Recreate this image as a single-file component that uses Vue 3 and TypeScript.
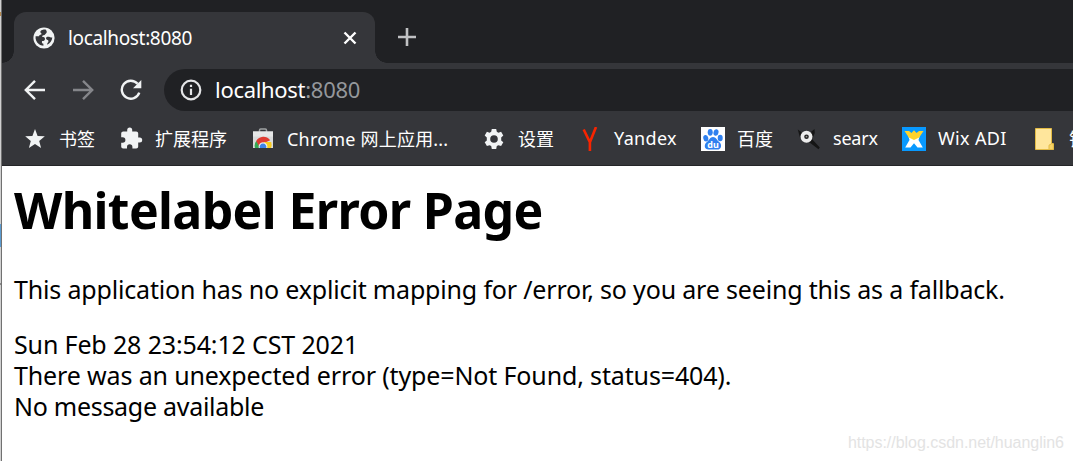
<template>
    <div class="window">
        <div class="edge"><i class="edge-orange"></i><i class="edge-blue"></i><i class="edge-mark"></i></div>
        <div class="browser">
            <header class="tabs">
                <div class="tab">
                    <svg class="globe" viewBox="0 0 22 22">
                        <circle cx="11" cy="11" r="10.6" fill="#f1f3f4" />
                        <path d="M12.600 2.600C9.600 2.300 7 3.700 7.400 5.200c.2.900 1.300.9 1.200 1.700-.1.900-2.500.6-2.600 2.300H2.600c-.4 3 .8 6 3.200 7.800 1.300 1 2.900 1.700 4.600 1.800v-2c-1.500-.4-1.800-1.600-1.300-2.900 1.800.1 2.900-.6 2.900-2 0-1.500-1.200-2.200-2.900-2.200 0-1 .6-1.500 1.700-1.500 1.400 0 1.200-1.400 2.200-1.800 1-.4 1.200-2.300-.4-3.800zM14.300 9.800c-1.500.2-1.700 2.300-.3 2.900 1 .4 1.500.5 1.400 1.700 0 1-1.300 1.400-1.300 3.300 3-1.200 5-4 5.200-7.200-1.500.2-2.600-.9-5-.7z" fill="#35363a" />
                    </svg>
                    <span class="tab-title">{{ host }}:{{ port }}</span>
                    <svg class="close" viewBox="0 0 14 14"><path d="M1.500 1.500l11 11M12.500 1.500l-11 11" /></svg>
                </div>
                <svg class="plus" viewBox="0 0 18 18"><path d="M9 0v18M0 9h18" /></svg>
            </header>

            <nav class="toolbar">
                <svg class="nav-icon" viewBox="0 0 22 22"><path d="M21 11H2.500M11 1.800L1.800 11l9.200 9.200" /></svg>
                <svg class="nav-icon disabled" viewBox="0 0 22 22"><path d="M1 11h18.500M11 1.800L20.200 11 11 20.200" /></svg>
                <svg class="nav-icon" viewBox="0 0 22 22">
                    <path d="M19.300 13.700A9 9 0 1 1 17.600 4.800" />
                    <path d="M21.300 1v8.300H13z" class="solid" />
                </svg>
                <div class="address">
                    <svg class="info" viewBox="0 0 22 22">
                        <circle cx="11" cy="11" r="9.300" />
                        <path d="M11 9.800v6.200M11 5.800v2.300" />
                    </svg>
                    <span class="url">{{ host }}<em>:{{ port }}</em></span>
                </div>
            </nav>

            <div class="bookmarks">
                <div v-for="b in bookmarks" :key="b.icon" class="bookmark">
                    <svg viewBox="0 0 24 24">
                        <path v-if="b.icon === 'star'" d="M12 2l2.600 6.900 7.200.4-5.600 4.600 1.900 7.100-6.100-4-6.100 4 1.900-7.100-5.600-4.600 7.200-.4z" fill="#f1f3f4" />
                        <path v-else-if="b.icon === 'puzzle'" d="M19.700 11h-1.500V7c0-1.100-.9-2-2-2h-4V3.500a2.500 2.500 0 0 0-5 0V5h-4c-1.100 0-2 .9-2 2v3.800h1.500a2.700 2.700 0 0 1 0 5.400H1.200V20c0 1.100.9 2 2 2H7v-1.500a2.700 2.700 0 0 1 5.400 0V22h3.800c1.100 0 2-.9 2-2v-4h1.500a2.500 2.500 0 0 0 0-5z" transform="translate(1 -.5)" fill="#f1f3f4" />
                        <g v-else-if="b.icon === 'store'">
                            <path d="M8.500 5V3.200q0-1.200 1.200-1.200h4.600q1.200 0 1.200 1.200V5" fill="none" stroke="#9fa2a3" stroke-width="1.500" />
                            <path d="M2 4.500h20V21H2z" fill="#d9dbdb" />
                            <path d="M2 4.500h20v5H2z" fill="#e7e8e8" />
                            <path d="M4 21a8 8 0 0 1 1.400-7.200L9 20v1z" fill="#35a852" />
                            <path d="M5.200 14a8.200 8.200 0 0 1 14-.8L12 16.500 8 19z" fill="#df3c32" />
                            <path d="M13 15h7.200a9 9 0 0 1-.1 6H14z" fill="#f9cb1f" />
                            <path d="M7.800 21a4.400 4.400 0 1 1 8.400 0z" fill="#f1f1f1" />
                            <path d="M8.800 21a3.400 3.400 0 1 1 6.400 0z" fill="#3f83e8" />
                        </g>
                        <path v-else-if="b.icon === 'gear'" fill-rule="evenodd" fill="#f1f3f4" d="M9.800 2h4.400l.6 2.800 1.600.9 2.700-.9 2.200 3.800-2.100 1.900v2.900l2.100 1.900-2.200 3.800-2.700-.9-1.600.9-.6 2.800H9.800l-.6-2.800-1.600-.9-2.700.9-2.200-3.800 2.100-1.900v-2.900L2.700 8.600l2.200-3.800 2.700.9 1.600-.9zM12 8.200a3.800 3.800 0 1 0 0 7.600 3.800 3.800 0 0 0 0-7.600z" />
                        <path v-else-if="b.icon === 'yandex'" d="M5.700 2.500l6.200 12.700V24M18 0l-6 15" fill="none" stroke="#f82400" stroke-width="2.600" />
                        <g v-else-if="b.icon === 'baidu'">
                            <path d="M0 0h24v24H0z" fill="#fff" />
                            <g fill="#2f80ef">
                                <ellipse cx="4.800" cy="11.300" rx="2.500" ry="3.300" transform="rotate(-12 4.800 11.300)" />
                                <ellipse cx="9.200" cy="5.300" rx="2.500" ry="3.400" />
                                <ellipse cx="15" cy="5.500" rx="2.500" ry="3.300" transform="rotate(12 15 5.500)" />
                                <ellipse cx="19.200" cy="11" rx="2.500" ry="3.200" />
                                <path d="M12 10c3 0 3.800 3 6.200 5 3.200 2.600 2.200 7.600-2 7.600H7.600c-4.200 0-5-4.700-2-7.300C8.400 13.200 9 10 12 10z" />
                            </g>
                            <text x="12" y="20.800" text-anchor="middle" class="du">du</text>
                        </g>
                        <g v-else-if="b.icon === 'searx'">
                            <path d="M.8 2.500l3.800 2.700h9L17.500 2l.3 4-2.600 6.300 7.600 8.200-1.300 1.800-9.500-7.200H7L2.800 10z" fill="#151515" />
                            <circle cx="9.500" cy="9.800" r="6" fill="#ededed" />
                            <circle cx="9.500" cy="9.800" r="2.300" fill="#222" />
                            <circle cx="9.500" cy="9.600" r=".9" fill="#999" />
                        </g>
                        <g v-else-if="b.icon === 'wix'">
                            <path d="M0 0h24v24H0z" fill="#0899ff" />
                            <path d="M6 8h12l-1.500 5 4.300 7.500h-5.300L12 16.200l-3.500 4.300H3.200L7.500 13z" fill="#fff" />
                            <path d="M2.500 4H7l2.500 2L12 3.200 14.500 6 17 4h4.500l-4.300 6.500L12 13l-5.200-2.500z" fill="#ffd32c" />
                        </g>
                        <g v-else>
                            <path d="M2.500 1.500h16v15.200h1.800v5.800H2.500z" fill="#ffe69c" stroke="#e3bb44" />
                            <path d="M16 22.500v-4.300l2.500-1.500h1.800v5.800z" fill="#f8d568" stroke="#e3bb44" />
                        </g>
                    </svg>
                    <span :class="b.icon">{{ b.label }}</span>
                </div>
            </div>

            <main class="page">
                <h1>Whitelabel Error Page</h1>
                <p class="fallback">This application has no explicit mapping for /error, so you are seeing this as a fallback.</p>
                <div class="date">Sun Feb 28 23:54:12 CST 2021</div>
                <div class="type">There was an unexpected error (type=Not Found, status=404).</div>
                <div class="message">No message available</div>
                <span class="watermark">https://blog.csdn.net/huanglin6</span>
            </main>
        </div>
    </div>
</template>

<script setup lang="ts">
interface Bookmark {
    icon: string;
    label: string;
}

const host = 'localhost';
const port = 8080;

const bookmarks: Bookmark[] = [
    { icon: 'star', label: '书签' },
    { icon: 'puzzle', label: '扩展程序' },
    { icon: 'store', label: 'Chrome 网上应用...' },
    { icon: 'gear', label: '设置' },
    { icon: 'yandex', label: 'Yandex' },
    { icon: 'baidu', label: '百度' },
    { icon: 'searx', label: 'searx' },
    { icon: 'wix', label: 'Wix ADI' },
    { icon: 'folder', label: '镜' },
];
</script>

<style>
body {
    overflow: hidden;
}
</style>

<style scoped>
.window {
    display: flex;
    width: 1073px;
    height: 461px;
    overflow: hidden;
    font-family: "Noto Sans", "Noto Sans CJK SC", sans-serif;
    background: #fff;
}

.edge {
    flex: none;
    display: flex;
    flex-direction: column;
    box-sizing: border-box;
    width: 2px;
    border-right: 1px solid #717171;
    background: #d0d0d0;
}

.edge-orange {
    height: 4px;
    margin-top: 12px;
    background: #b98c50;
}

.edge-blue {
    height: 23px;
    margin-top: 208px;
    background: #5b9bd0;
}

.edge-mark {
    height: 2px;
    margin-top: 36px;
    background: #888;
}

.browser {
    flex: 1;
    min-width: 0;
    display: flex;
    flex-direction: column;
}

.tabs {
    display: flex;
    box-sizing: border-box;
    height: 63px;
    padding: 12px 0 0 12px;
    background: #202124;
}

.tab {
    position: relative;
    display: flex;
    align-items: center;
    box-sizing: border-box;
    width: 361px;
    height: 51px;
    padding: 0 18px 0 19px;
    border-radius: 12px 12px 0 0;
    background: #35363a;
}

.tab::before,
.tab::after {
    content: "";
    position: absolute;
    bottom: 0;
    width: 12px;
    height: 12px;
}

.tab::before {
    left: -12px;
    background: radial-gradient(circle at 0 0, transparent 11.500px, #35363a 12px);
}

.tab::after {
    right: -12px;
    background: radial-gradient(circle at 100% 0, transparent 11.500px, #35363a 12px);
}

.globe {
    width: 22px;
    height: 22px;
}

.tab-title {
    flex: 1;
    margin-left: 13px;
    color: #fff;
    font-size: 19px;
    letter-spacing: -0.350px;
}

.close {
    width: 14px;
    height: 14px;
    stroke: #fff;
    stroke-width: 2.400;
}

.plus {
    width: 18px;
    height: 18px;
    margin: 16px 0 0 23px;
    stroke: #c0c1c3;
    stroke-width: 2.600;
}

.toolbar {
    display: flex;
    align-items: center;
    box-sizing: border-box;
    height: 53px;
    padding-left: 22px;
    gap: 26px;
    background: #35363a;
}

.nav-icon {
    flex: none;
    width: 22px;
    height: 22px;
    fill: none;
    stroke: #f1f3f4;
    stroke-width: 2.400;
}

.disabled {
    stroke: #85868a;
}

.solid {
    fill: #f1f3f4;
    stroke: none;
}

.address {
    flex: 1;
    display: flex;
    align-items: center;
    height: 42px;
    margin-left: -4px;
    padding-left: 16px;
    border-radius: 21px 0 0 21px;
    background: #202124;
}

.info {
    width: 22px;
    height: 22px;
    fill: none;
    stroke: #e4e5e7;
    stroke-width: 2.200;
}

.url {
    margin: -2px 0 0 13px;
    color: #fff;
    font-size: 22px;
    letter-spacing: -0.300px;
}

.url em {
    color: #94979b;
    font-style: normal;
}

.bookmarks {
    display: grid;
    grid-template-columns: 96px 132px 231px 96px 123px 96px 105px 131px 100px;
    box-sizing: border-box;
    height: 50px;
    padding: 10px 0 0 21px;
    overflow: hidden;
    border-bottom: 1px solid #242528;
    background: #35363a;
}

.bookmark {
    display: flex;
    align-items: center;
    height: 26px;
    gap: 12px;
    color: #fff;
    font-size: 18px;
    white-space: nowrap;
}

.bookmark svg {
    flex: none;
    width: 24px;
    height: 24px;
}

.bookmark span {
    margin-top: -2px;
}

.store {
    letter-spacing: 0.200px;
}

.yandex,
.wix {
    letter-spacing: 0.350px;
}

.searx {
    letter-spacing: -0.200px;
}

.du {
    fill: #fff;
    font-size: 9px;
    font-weight: 700;
}

.page {
    position: relative;
    flex: 1;
    padding-left: 12px;
    color: #000;
    font-size: 25px;
    line-height: 31px;
    white-space: nowrap;
    background: #fff;
}

h1 {
    margin: 10px 0 0;
    font-size: 50px;
    line-height: 68px;
    letter-spacing: -0.650px;
}

p {
    margin: 30px 0 24px;
}

.fallback {
    letter-spacing: -0.175px;
}

.date,
.type {
    letter-spacing: -0.140px;
}

.message {
    letter-spacing: -0.280px;
}

.watermark {
    position: absolute;
    right: 9px;
    bottom: 3px;
    color: #e3e3e3;
    font-family: "Liberation Sans", sans-serif;
    font-size: 16px;
    letter-spacing: -0.030px;
}
</style>
